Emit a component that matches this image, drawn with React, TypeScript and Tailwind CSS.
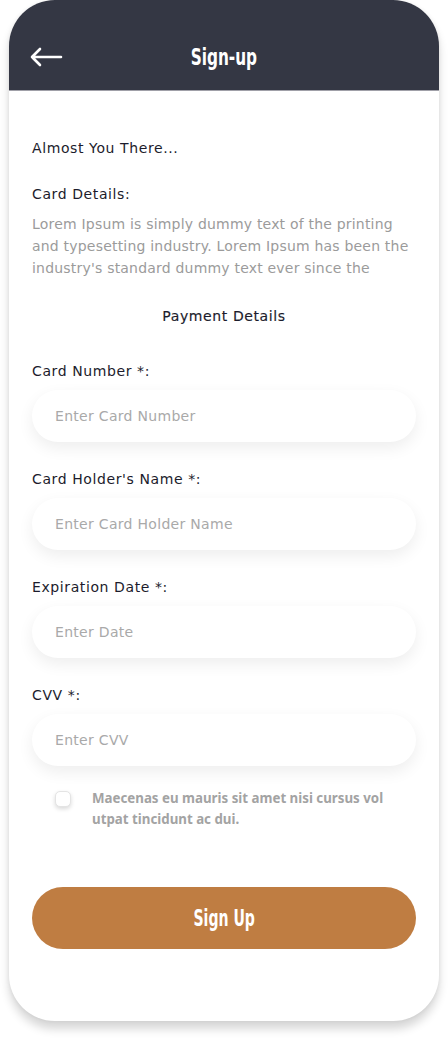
import React from "react";

const poppins = { fontFamily: "'DejaVu Sans', 'Noto Sans', sans-serif" } as React.CSSProperties;
const cond = {
  fontFamily: "'DejaVu Sans Condensed', 'Liberation Sans Narrow', 'DejaVu Sans', sans-serif",
  fontStretch: "condensed",
} as React.CSSProperties;

function Field({ label, placeholder }: { label: string; placeholder: string }) {
  return (
    <div className="flex flex-col">
      <div className="text-[14px] leading-[20px] tracking-[0.6px] text-[#1c1c2c]" style={poppins}>
        {label}
      </div>
      <div className="mt-[9px] h-[52px] rounded-full bg-white shadow-[0_6px_16px_rgba(0,0,0,0.07)] flex items-center pl-[23px]">
        <span className="text-[14px] tracking-[0.3px] text-[#a9a9a9]" style={poppins}>
          {placeholder}
        </span>
      </div>
    </div>
  );
}

export default function App() {
  return (
    <div className="min-h-[1040px] bg-white px-[9px]">
      <div className="w-[430px] h-[1021px] rounded-[46px] bg-white overflow-hidden shadow-[0_8px_10px_rgba(0,0,0,0.16),0_0_4px_rgba(0,0,0,0.06)] flex flex-col">
        <header className="h-[91px] bg-[#343744] border-b border-[#a0a0a8] flex items-start relative shrink-0">
          <svg
            className="ml-[21px] mt-[47px]"
            width="33"
            height="20"
            viewBox="0 0 33 20"
            fill="none"
            stroke="white"
            strokeWidth="2.6"
            strokeLinecap="round"
            strokeLinejoin="round"
          >
            <path d="M31 10H2M10 2L2 10l8 8" />
          </svg>
          <div className="absolute left-0 right-0 top-[43px] flex justify-center">
            <span
              className="text-white font-bold text-[23px] leading-[28px] scale-x-[0.74] inline-block"
              style={cond}
            >
              Sign-up
            </span>
          </div>
        </header>

        <div className="px-[23px] flex flex-col">
          <div className="mt-[47px] text-[14px] leading-[20px] tracking-[0.6px] text-[#1c1c2c]" style={poppins}>
            Almost You There...
          </div>
          <div className="mt-[26px] text-[14px] leading-[20px] tracking-[0.6px] text-[#1c1c2c]" style={poppins}>
            Card Details:
          </div>
          <p className="mt-[9px] text-[14px] leading-[22px] tracking-[0.2px] text-[#9b9b9b]" style={poppins}>
            Lorem Ipsum is simply dummy text of the printing and typesetting industry. Lorem Ipsum has been the
            industry's standard dummy text ever since the
          </p>
          <div
            className="mt-[27px] text-center text-[14px] leading-[20px] tracking-[0.6px] text-[#1c1c2c] [-webkit-text-stroke:0.15px_#1c1c2c]"
            style={poppins}
          >
            Payment Details
          </div>

          <div className="mt-[35px] flex flex-col gap-[27px]">
            <Field label="Card Number *:" placeholder="Enter Card Number" />
            <Field label="Card Holder's Name *:" placeholder="Enter Card Holder Name" />
            <Field label="Expiration Date *:" placeholder="Enter Date" />
            <Field label="CVV *:" placeholder="Enter CVV" />
          </div>

          <div className="mt-[22px] flex items-start pl-[23px]">
            <div className="mt-[3px] w-[16px] h-[16px] rounded-[5px] bg-white border border-[#e4e4e4] shadow-[0_2px_4px_rgba(0,0,0,0.15)] shrink-0" />
            <p
              className="ml-[21px] w-[300px] text-[13.3px] leading-[21px] font-bold text-[#a3a3a3]"
              style={{ fontFamily: "'Noto Sans', 'Open Sans', sans-serif" }}
            >
              Maecenas eu mauris sit amet nisi cursus vol utpat tincidunt ac dui.
            </p>
          </div>

          <button className="mt-[57px] h-[62px] rounded-full bg-[#bf7d42] flex items-center justify-center">
            <span
              className="text-white font-bold text-[23px] leading-[28px] scale-x-[0.68] inline-block"
              style={cond}
            >
              Sign Up
            </span>
          </button>
        </div>
      </div>
    </div>
  );
}
